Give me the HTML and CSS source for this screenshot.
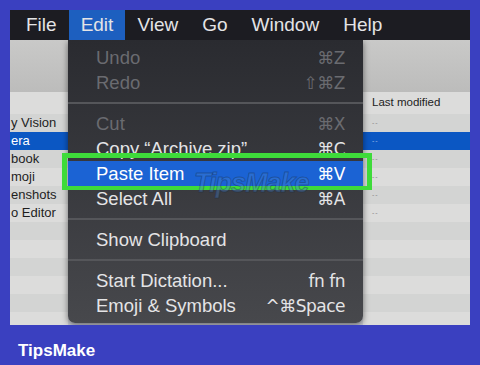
FILE: index.html
```html
<!DOCTYPE html>
<html lang="en">

<head>
    <meta charset="UTF-8">
    <title>Edit menu - Paste Item</title>
    <link rel="stylesheet" href="styles.css">
</head>

<body>
    <div class="screen">
        <div class="menubar">
            <span class="menu-title first">File</span>
            <span class="menu-title active">Edit</span>
            <span class="menu-title">View</span>
            <span class="menu-title">Go</span>
            <span class="menu-title">Window</span>
            <span class="menu-title">Help</span>
        </div>

        <div class="desktop">
            <!-- finder sidebar, left of the menu -->
            <div class="finder finder-left">
                <div class="finder-top"></div>
                <div class="finder-head"></div>
                <div class="row">y Vision</div>
                <div class="row selected">era</div>
                <div class="row">book</div>
                <div class="row">moji</div>
                <div class="row">enshots</div>
                <div class="row">o Editor</div>
                <div class="row"></div>
                <div class="row"></div>
                <div class="row"></div>
                <div class="row"></div>
                <div class="row"></div>
            </div>

            <div class="dropdown">
                <div class="item disabled"><span>Undo</span><span class="key">⌘Z</span></div>
                <div class="item disabled"><span>Redo</span><span class="key">⇧⌘Z</span></div>
                <div class="sep"></div>
                <div class="item disabled"><span>Cut</span><span class="key">⌘X</span></div>
                <div class="item"><span>Copy “Archive.zip”</span><span class="key">⌘C</span></div>
                <div class="item highlight"><span>Paste Item</span><span class="key">⌘V</span></div>
                <div class="item"><span>Select All</span><span class="key">⌘A</span></div>
                <div class="sep"></div>
                <div class="item"><span>Show Clipboard</span></div>
                <div class="sep"></div>
                <div class="item"><span>Start Dictation...</span><span class="key">fn fn</span></div>
                <div class="item"><span>Emoji &amp; Symbols</span><span class="key">^⌘Space</span></div>
            </div>

            <!-- finder list, right of the menu -->
            <div class="finder finder-right">
                <div class="finder-top"></div>
                <div class="finder-head">Last modified</div>
                <div class="row small">--</div>
                <div class="row small selected">--</div>
                <div class="row small">--</div>
                <div class="row small">--</div>
                <div class="row small">--</div>
                <div class="row small">--</div>
                <div class="row"></div>
                <div class="row"></div>
                <div class="row"></div>
                <div class="row"></div>
                <div class="row"></div>
            </div>

            <div class="callout"></div>
            <div class="watermark">TipsMake</div>
        </div>
    </div>

    <footer class="brand">TipsMake</footer>
</body>

</html>
```

FILE: styles.css
```css
:root {
    --page-blue: #3a40c0;
    --bar-color: #1c1c22;
    --menu-text: #e4e4e6;
    --menu-dim: #6a6b70;
    --select-blue: #1b63d4;
    --finder-blue: #0b57c3;
    --callout-green: #3edb3a;
}

* {
    box-sizing: border-box;
    margin: 0;
    padding: 0;
}

body {
    width: 480px;
    height: 365px;
    overflow: hidden;
    background-color: var(--page-blue);
    font-family: 'Liberation Sans', Arial, sans-serif;
}

.screen {
    margin: 10px 10px 0;
    height: 315px;
    display: flex;
    flex-direction: column;
}

.menubar {
    height: 30px;
    display: flex;
    background-color: var(--bar-color);
}

.menu-title {
    display: flex;
    align-items: center;
    padding: 0 12px;
    font-size: 19px;
    color: var(--menu-text);
}

.menu-title.first {
    margin-left: 4px;
}

.menu-title.active {
    background-color: #1d5fbf;
}

.desktop {
    flex: 1;
    position: relative;
    display: grid;
    grid-template-columns: 58px 295px 1fr;
    background-color: #c9cbd2;
    overflow: hidden;
}

/* finder windows */
.finder {
    background-color: #dcdcdb;
    overflow: hidden;
}

.finder-top {
    height: 52px;
    background: linear-gradient(#c9c9c8, #bcbcbb);
}

.finder-head {
    height: 22px;
    padding-left: 9px;
    line-height: 21px;
    font-size: 11.5px;
    color: #222;
}

.row {
    height: 18px;
    line-height: 18px;
    font-size: 13px;
    color: #1e1e1e;
    white-space: nowrap;
}

.row:nth-child(odd) {
    background-color: #d3d4d3;
}

.finder-left .row {
    padding-left: 1px;
}

.row.small {
    padding-left: 9px;
    font-size: 7px;
    letter-spacing: 1px;
    color: #8a8a8a;
}

.row.selected {
    background-color: var(--finder-blue);
    color: #fff;
}

.row.small.selected {
    color: #9bb8e6;
}

/* the edit menu */
.dropdown {
    height: 283px;
    padding: 5px 0;
    background: linear-gradient(#2a2b30, #47484c);
    border-radius: 0 0 7px 7px;
    box-shadow: 0 2px 6px rgba(0, 0, 0, 0.5);
    font-size: 18.5px;
    color: var(--menu-text);
    position: relative;
    z-index: 1;
}

.item {
    height: 25px;
    display: flex;
    justify-content: space-between;
    align-items: center;
    padding: 0 18px 0 28px;
}

.item.disabled {
    color: var(--menu-dim);
}

.item.highlight {
    background-color: var(--select-blue);
    color: #fff;
}

.key {
    font-family: 'DejaVu Sans', 'Liberation Sans', sans-serif;
    font-size: 17px;
    letter-spacing: -0.5px;
}

.sep {
    height: 16px;
    display: flex;
    align-items: center;
}

.sep::after {
    content: '';
    flex: 1;
    height: 2px;
    background-color: #55565a;
}

/* green annotation box and watermark */
.callout {
    position: absolute;
    left: 52px;
    top: 113px;
    width: 310px;
    height: 37px;
    border: 5px solid var(--callout-green);
    border-bottom-width: 4px;
    z-index: 2;
}

.watermark {
    position: absolute;
    left: 184px;
    top: 128px;
    font-size: 27px;
    line-height: 30px;
    font-weight: 700;
    font-style: italic;
    letter-spacing: -1px;
    color: rgba(70, 130, 210, 0.35);
    -webkit-text-stroke: 1px rgba(20, 40, 60, 0.35);
    z-index: 3;
}

.brand {
    margin: 16px 0 0 18px;
    font-size: 17px;
    font-weight: 700;
    color: #fff;
}
```
